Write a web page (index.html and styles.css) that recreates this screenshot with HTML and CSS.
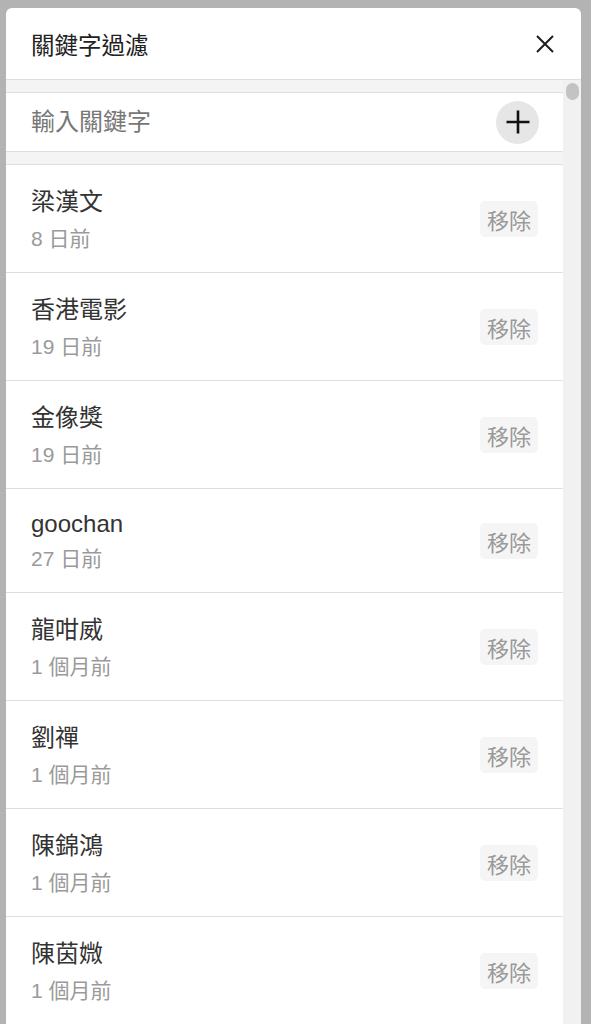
FILE: index.html
```html
<!DOCTYPE html>
<html lang="zh-Hant">
<head>
    <meta charset="UTF-8">
    <meta name="viewport" content="width=device-width, initial-scale=1.0">
    <title>關鍵字過濾</title>
    <link rel="stylesheet" href="styles.css">
</head>
<body>
    <!-- Keyword filter dialog -->
    <div class="modal">
        <div class="modal-header">
            <h2>關鍵字過濾</h2>
            <button class="close-btn" aria-label="關閉">
                <svg width="18" height="18" viewBox="0 0 18 18">
                    <path d="M1 1 L17 17 M17 1 L1 17" stroke="#1e1e1e" stroke-width="2" fill="none"/>
                </svg>
            </button>
        </div>
        <div class="modal-body">
            <div class="pane">
                <form class="add-row">
                    <input type="text" placeholder="輸入關鍵字">
                    <button type="submit" class="add-btn" aria-label="新增">
                        <svg width="24" height="24" viewBox="0 0 24 24">
                            <path d="M12 0.5 V23.5 M0.5 12 H23.5" stroke="#111" stroke-width="2.6" fill="none"/>
                        </svg>
                    </button>
                </form>
                <ul class="keywords">
                    <li>
                        <div>
                            <div class="name">梁漢文</div>
                            <div class="time">8 日前</div>
                        </div>
                        <button class="remove-btn">移除</button>
                    </li>
                    <li>
                        <div>
                            <div class="name">香港電影</div>
                            <div class="time">19 日前</div>
                        </div>
                        <button class="remove-btn">移除</button>
                    </li>
                    <li>
                        <div>
                            <div class="name">金像獎</div>
                            <div class="time">19 日前</div>
                        </div>
                        <button class="remove-btn">移除</button>
                    </li>
                    <li>
                        <div>
                            <div class="name latin">goochan</div>
                            <div class="time">27 日前</div>
                        </div>
                        <button class="remove-btn">移除</button>
                    </li>
                    <li>
                        <div>
                            <div class="name">龍咁威</div>
                            <div class="time">1 個月前</div>
                        </div>
                        <button class="remove-btn">移除</button>
                    </li>
                    <li>
                        <div>
                            <div class="name">劉禪</div>
                            <div class="time">1 個月前</div>
                        </div>
                        <button class="remove-btn">移除</button>
                    </li>
                    <li>
                        <div>
                            <div class="name">陳錦鴻</div>
                            <div class="time">1 個月前</div>
                        </div>
                        <button class="remove-btn">移除</button>
                    </li>
                    <li>
                        <div>
                            <div class="name">陳茵媺</div>
                            <div class="time">1 個月前</div>
                        </div>
                        <button class="remove-btn">移除</button>
                    </li>
                </ul>
            </div>
            <div class="scrollbar">
                <div class="thumb"></div>
            </div>
        </div>
    </div>
</body>
</html>
```

FILE: styles.css
```css
body {
    margin: 0;
    background-color: #b3b3b3;
    font-family: "Liberation Sans", "Noto Sans CJK TC", sans-serif;
    height: 1024px;
    overflow: hidden;
}
.modal {
    width: 575px;
    margin: 8px 0 0 6px;
    height: 1016px;
    background: white;
    border-radius: 6px 6px 0 0;
    overflow: hidden;
    display: flex;
    flex-direction: column;
}
.modal-header {
    height: 71px;
    flex-shrink: 0;
    display: flex;
    align-items: center;
    justify-content: space-between;
    padding: 0 27px 0 25px;
    border-bottom: 1px solid #dedede;
}
.modal-header h2 {
    margin: 0;
    font-size: 23.5px;
    font-weight: normal;
    color: #222;
}
.close-btn {
    border: none;
    background: none;
    padding: 0;
    width: 18px;
    height: 18px;
    display: flex;
    cursor: pointer;
}
.modal-body {
    flex: 1;
    display: flex;
    background-color: #f4f4f4;
}
.pane {
    flex: 1;
    padding-top: 12px;
}
.add-row {
    height: 58px;
    display: flex;
    align-items: center;
    justify-content: space-between;
    padding: 0 24px 0 25px;
    background: white;
    border-top: 1px solid #dedede;
    border-bottom: 1px solid #dedede;
    margin: 0 0 12px;
}
.add-row input {
    flex: 1;
    border: none;
    outline: none;
    padding: 0;
    font-family: inherit;
    font-size: 24px;
    color: #333;
    background: none;
}
.add-row input::placeholder {
    color: #777;
}
.add-btn {
    width: 43px;
    height: 43px;
    border-radius: 50%;
    border: none;
    background-color: #e6e6e6;
    padding: 0;
    display: flex;
    align-items: center;
    justify-content: center;
    cursor: pointer;
}
.keywords {
    list-style: none;
    margin: 0;
    padding: 0;
}
.keywords li {
    display: flex;
    align-items: center;
    justify-content: space-between;
    padding: 20px 25px 19px;
    background: white;
    border-top: 1px solid #dedede;
}
.name {
    font-size: 24px;
    line-height: 33px;
    color: #333;
}
.name.latin {
    line-height: 29px;
}
.time {
    margin-top: 7px;
    font-size: 21px;
    line-height: 28px;
    color: #9a9a9a;
}
.remove-btn {
    height: 36px;
    padding: 0 7px;
    border: none;
    border-radius: 5px;
    background-color: #f5f5f5;
    font-family: inherit;
    font-size: 22px;
    color: #999;
    cursor: pointer;
}
.scrollbar {
    width: 18px;
    background-color: #f1f1f1;
}
.thumb {
    width: 13px;
    height: 17px;
    margin: 3px 0 0 3px;
    border-radius: 7px;
    background-color: #c3c3c3;
}
```
